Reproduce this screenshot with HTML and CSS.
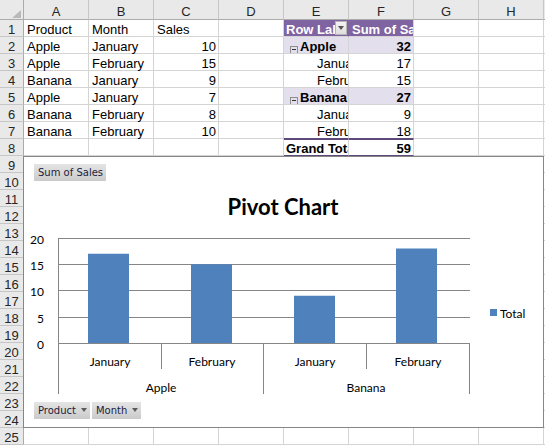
FILE: index.html
```html
<!DOCTYPE html>
<html>
<head>
	<meta charset="utf-8">
	<title>Pivot Chart</title>
	<link rel="stylesheet" href="styles.css">
</head>
<body>
<div class="sheet">
	<div class="grid">
		<div class="corner"><span class="corner-mark"></span></div>
		<div class="ch">A</div><div class="ch">B</div><div class="ch">C</div><div class="ch">D</div>
		<div class="ch">E</div><div class="ch">F</div><div class="ch">G</div><div class="ch">H</div><div class="ch"></div>

		<div class="rh">1</div>
		<div class="c">Product</div><div class="c">Month</div><div class="c">Sales</div><div class="c"></div>
		<div class="c pv-head pv-labels"><span class="clip">Row Labels</span><span class="pv-drop"></span></div>
		<div class="c pv-head clip">Sum of Sales</div>
		<div class="c"></div><div class="c"></div><div class="c"></div>

		<div class="rh">2</div>
		<div class="c">Apple</div><div class="c">January</div><div class="c num">10</div><div class="c"></div>
		<div class="c pv-group clip"><span class="toggle"></span>Apple</div>
		<div class="c pv-group num">32</div>
		<div class="c"></div><div class="c"></div><div class="c"></div>

		<div class="rh">3</div>
		<div class="c">Apple</div><div class="c">February</div><div class="c num">15</div><div class="c"></div>
		<div class="c pv-item clip">January</div>
		<div class="c pv-val num">17</div>
		<div class="c"></div><div class="c"></div><div class="c"></div>

		<div class="rh">4</div>
		<div class="c">Banana</div><div class="c">January</div><div class="c num">9</div><div class="c"></div>
		<div class="c pv-item clip">February</div>
		<div class="c pv-val num">15</div>
		<div class="c"></div><div class="c"></div><div class="c"></div>

		<div class="rh">5</div>
		<div class="c">Apple</div><div class="c">January</div><div class="c num">7</div><div class="c"></div>
		<div class="c pv-group clip"><span class="toggle"></span>Banana</div>
		<div class="c pv-group num">27</div>
		<div class="c"></div><div class="c"></div><div class="c"></div>

		<div class="rh">6</div>
		<div class="c">Banana</div><div class="c">February</div><div class="c num">8</div><div class="c"></div>
		<div class="c pv-item clip">January</div>
		<div class="c pv-val num">9</div>
		<div class="c"></div><div class="c"></div><div class="c"></div>

		<div class="rh">7</div>
		<div class="c">Banana</div><div class="c">February</div><div class="c num">10</div><div class="c"></div>
		<div class="c pv-item pv-last clip">February</div>
		<div class="c pv-val pv-last num">18</div>
		<div class="c"></div><div class="c"></div><div class="c"></div>

		<div class="rh">8</div>
		<div class="c"></div><div class="c"></div><div class="c"></div><div class="c"></div>
		<div class="c pv-total clip">Grand Total</div>
		<div class="c pv-total num">59</div>
		<div class="c"></div><div class="c"></div><div class="c"></div>

		<div class="rh">9</div><div class="rh">10</div><div class="rh">11</div><div class="rh">12</div>
		<div class="rh">13</div><div class="rh">14</div><div class="rh">15</div><div class="rh">16</div>
		<div class="rh">17</div><div class="rh">18</div><div class="rh">19</div><div class="rh">20</div>
		<div class="rh">21</div><div class="rh">22</div><div class="rh">23</div><div class="rh">24</div>
		<div class="rh">25</div>
		<div class="blank-cells"></div>
	</div>

	<div class="chart">
		<div class="field-btn">Sum of Sales</div>
		<svg class="plot" width="519" height="221" viewBox="0 0 519 221">
			<text class="chart-title" x="259" y="34">Pivot Chart</text>

			<g class="gridlines">
				<line x1="34" y1="57.5" x2="446" y2="57.5"/>
				<line x1="34" y1="83.5" x2="446" y2="83.5"/>
				<line x1="34" y1="109.5" x2="446" y2="109.5"/>
				<line x1="34" y1="136.5" x2="446" y2="136.5"/>
			</g>

			<g class="y-labels">
				<text x="20" y="58">20</text>
				<text x="20" y="84">15</text>
				<text x="20" y="110">10</text>
				<text x="20" y="137">5</text>
				<text x="20" y="163">0</text>
			</g>

			<g class="bars">
				<rect x="64" y="72.75" width="41" height="89.25"/>
				<rect x="167" y="83.25" width="41" height="78.75"/>
				<rect x="270" y="114.75" width="41" height="47.25"/>
				<rect x="372" y="67.5" width="41" height="94.5"/>
			</g>

			<g class="axis">
				<line x1="34" y1="162.5" x2="446" y2="162.5"/>
				<line x1="34.5" y1="57" x2="34.5" y2="213"/>
				<line x1="137.5" y1="162" x2="137.5" y2="188"/>
				<line x1="239.5" y1="162" x2="239.5" y2="213"/>
				<line x1="342.5" y1="162" x2="342.5" y2="188"/>
				<line x1="445.5" y1="162" x2="445.5" y2="213"/>
			</g>

			<g class="x-labels">
				<text x="86" y="180">January</text>
				<text x="188" y="180">February</text>
				<text x="291" y="180">January</text>
				<text x="394" y="180">February</text>
				<text x="137" y="206">Apple</text>
				<text x="342" y="206">Banana</text>
			</g>

			<rect class="legend-key" x="466" y="128" width="7" height="7"/>
			<text class="legend-text" x="476" y="132">Total</text>
		</svg>
		<div class="axis-fields">
			<div class="field-btn drop">Product</div>
			<div class="field-btn drop">Month</div>
		</div>
	</div>
</div>
</body>
</html>
```

FILE: styles.css
```css
body {
	margin: 0;
	background: white;
	font-family: "Liberation Sans", Arial, sans-serif;
	font-size: 13px;
	color: black;
	overflow: hidden;
}
.sheet {
	position: relative;
	width: 545px;
	height: 445px;
	overflow: hidden;
}
.grid {
	display: grid;
	grid-template-columns: 24px repeat(9, 65px);
	grid-template-rows: 20px repeat(25, 17px);
}
.c {
	box-sizing: border-box;
	border-right: 1px solid #d4d4d4;
	border-bottom: 1px solid #d4d4d4;
	padding: 4px 2px 0 3px;
	line-height: 12px;
	white-space: nowrap;
}
.num {
	text-align: right;
}
.clip {
	overflow: hidden;
}
.corner {
	box-sizing: border-box;
	background: #e9e9e9;
	border-right: 1px solid #ababab;
	border-bottom: 1px solid #ababab;
	display: flex;
	justify-content: flex-end;
	align-items: flex-end;
	padding: 0 2px 1px 0;
}
.corner-mark {
	width: 0;
	height: 0;
	border-left: 9px solid transparent;
	border-bottom: 8px solid #b9b9b9;
}
.ch {
	box-sizing: border-box;
	background: #e9e9e9;
	border-right: 1px solid #c6c6c6;
	border-bottom: 1px solid #ababab;
	text-align: center;
	padding-top: 6px;
	line-height: 12px;
	color: #262626;
}
.rh {
	box-sizing: border-box;
	background: #e9e9e9;
	border-right: 1px solid #ababab;
	border-bottom: 1px solid #c6c6c6;
	text-align: center;
	padding-top: 4px;
	line-height: 12px;
	color: #262626;
	grid-column: 1;
}
.blank-cells {
	grid-column: 2 / -1;
	grid-row: 10 / -1;
	background-image:
		linear-gradient(to right, transparent 64px, #d4d4d4 64px),
		linear-gradient(to bottom, transparent 16px, #d4d4d4 16px);
	background-size: 65px 100%, 100% 17px;
}

/* pivot table */
.pv-head {
	background: #8064a2;
	color: white;
	font-weight: bold;
}
.pv-labels {
	display: flex;
	align-items: flex-start;
	padding: 4px 1px 0 2px;
	border-right-color: #8064a2;
}
.pv-labels .clip {
	flex: 1;
	min-width: 0;
}
.pv-drop {
	box-sizing: border-box;
	width: 12px;
	height: 14px;
	margin-top: -3px;
	background: linear-gradient(#f4f4f4, #dedede);
	border: 1px solid #b5b5b5;
	display: flex;
	justify-content: center;
	align-items: center;
}
.pv-drop::after {
	content: "";
	border-left: 3px solid transparent;
	border-right: 3px solid transparent;
	border-top: 4px solid #555;
}
.pv-group {
	background: #e4dfec;
	font-weight: bold;
	padding-left: 6px;
}
.toggle {
	box-sizing: border-box;
	display: inline-flex;
	justify-content: center;
	align-items: center;
	width: 8px;
	height: 8px;
	border: 1px solid #8d8d8d;
	margin-right: 2px;
	vertical-align: 1px;
}
.toggle::after {
	content: "";
	width: 4px;
	height: 1px;
	background: #333;
}
.pv-item {
	padding-left: 33px;
}
.pv-last {
	border-bottom-color: #5f497a;
}
.pv-total {
	font-weight: bold;
	border-top: 1px solid #5f497a;
	border-bottom-color: #5f497a;
	padding-top: 3px;
	padding-left: 2px;
}

/* chart */
.chart {
	position: absolute;
	left: 23px;
	top: 156px;
	width: 521px;
	height: 272px;
	box-sizing: border-box;
	border: 1px solid #868686;
	background: white;
	display: flex;
	flex-direction: column;
	align-items: flex-start;
}
.field-btn {
	height: 17px;
	line-height: 17px;
	padding: 0 3px 0 4px;
	font-family: "DejaVu Sans", sans-serif;
	font-size: 10px;
	color: #1c1c40;
	background: linear-gradient(#e4e4e4, #cbcbcb);
}
.chart > .field-btn {
	margin: 7px 0 0 10px;
}
.plot {
	display: block;
}
.axis-fields {
	display: flex;
	gap: 2px;
	margin-left: 10px;
}
.drop::after {
	content: "";
	display: inline-block;
	border-left: 3.5px solid transparent;
	border-right: 3.5px solid transparent;
	border-top: 4px solid #5c5c5c;
	margin: 0 0 0 5px;
	vertical-align: 2px;
}
.chart-title {
	font-family: Lato, sans-serif;
	font-weight: bold;
	font-size: 22px;
	text-anchor: middle;
}
.gridlines line,
.axis line {
	stroke: #868686;
	stroke-width: 1;
}
.bars rect,
.legend-key {
	fill: #4f81bd;
}
.y-labels text,
.x-labels text,
.legend-text {
	font-family: Lato, sans-serif;
	font-size: 12px;
	dominant-baseline: central;
}
.y-labels text {
	text-anchor: end;
}
.x-labels text {
	text-anchor: middle;
}
```
